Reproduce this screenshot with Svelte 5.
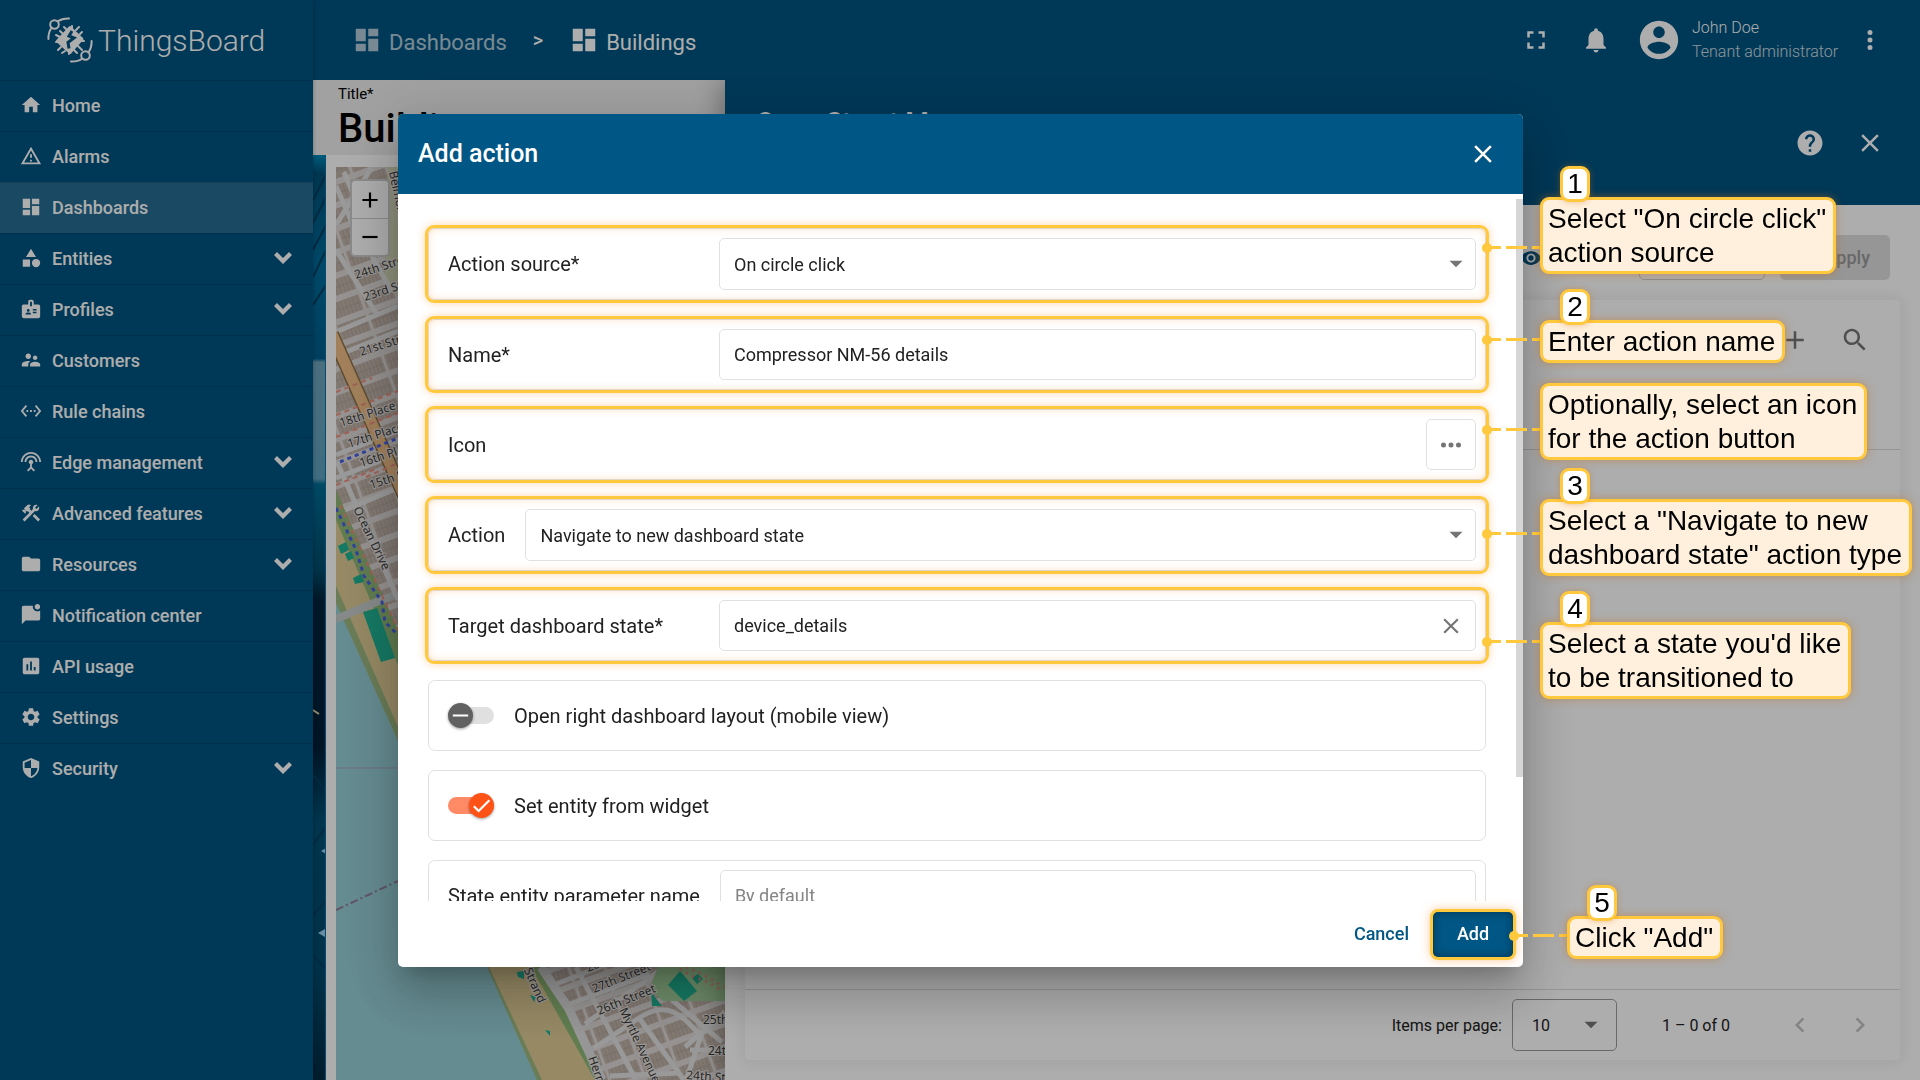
<script lang="ts">
    const icons: Record<string, string> = {
        home: "M10 20v-6h4v6h5v-8h3L12 3 2 12h3v8z",
        alarm: "M12 2L1 21h22zM12 6l7.53 13H4.47zM11 10v4h2v-4zM11 16v2h2v-2z",
        dashboard: "M3 13h8V3H3zM3 21h8v-6H3zM13 21h8V11h-8zM13 3v6h8V3z",
        shape: "M11 13.500V21.500H3V13.500zM12 2l5.500 9h-11zM17.500 13a4.500 4.500 0 1 1 0 9 4.500 4.500 0 0 1 0-9z",
        badge: "M20 7h-5V4c0-1.100-.9-2-2-2h-2c-1.100 0-2 .9-2 2v3H4c-1.100 0-2 .9-2 2v11c0 1.100.9 2 2 2h16c1.100 0 2-.9 2-2V9c0-1.100-.9-2-2-2zM9 12c.83 0 1.500.67 1.500 1.500S9.830 15 9 15s-1.500-.67-1.500-1.500S8.170 12 9 12zm3 6H6v-.75c0-1 2-1.500 3-1.500s3 .5 3 1.500V18zm1-9h-2V4h2v5zm5 7.500h-4V15h4v1.500zm0-3h-4V12h4v1.500z",
        people: "M16.500 12c1.380 0 2.490-1.120 2.490-2.500S17.880 7 16.500 7C15.120 7 14 8.120 14 9.500s1.120 2.500 2.500 2.500zM9 11c1.660 0 2.990-1.340 2.990-3S10.660 5 9 5C7.340 5 6 6.340 6 8s1.340 3 3 3zm7.500 3c-1.830 0-5.500.92-5.500 2.750V19h11v-2.250c0-1.830-3.670-2.750-5.500-2.750zM9 13c-2.330 0-7 1.170-7 3.500V19h7v-2.250c0-.85.33-2.340 2.370-3.470C10.500 13.100 9.660 13 9 13z",
        chain: "M7.770 6.760L6.230 5.480.82 12l5.410 6.520 1.540-1.280L3.420 12l4.350-5.240zM7 13h2v-2H7v2zm10-2h-2v2h2v-2zm-6 2h2v-2h-2v2zm6.770-7.520l-1.540 1.280L20.580 12l-4.350 5.240 1.540 1.280L23.180 12l-5.410-6.520z",
        antenna: "M12 5c-3.870 0-7 3.130-7 7h2c0-2.760 2.240-5 5-5s5 2.240 5 5h2c0-3.870-3.130-7-7-7zm1 9.290c.88-.39 1.500-1.260 1.500-2.290 0-1.380-1.120-2.500-2.500-2.500S9.500 10.620 9.500 12c0 1.020.62 1.900 1.500 2.290v3.300L7.590 21 9 22.410l3-3 3 3L16.410 21 13 17.590v-3.300zM12 1C5.930 1 1 5.930 1 12h2c0-4.970 4.030-9 9-9s9 4.030 9 9h2c0-6.070-4.930-11-11-11z",
        tools: "M13.783 15.172l2.121-2.121 5.996 5.996-2.121 2.121zM17.500 10c1.930 0 3.500-1.570 3.500-3.500 0-.58-.16-1.120-.41-1.600l-2.700 2.700-1.490-1.490 2.700-2.700c-.48-.25-1.020-.41-1.600-.41C15.570 3 14 4.570 14 6.500c0 .41.08.8.21 1.160l-1.850 1.850-1.780-1.780.71-.71-1.410-1.410L12 3.490c-1.170-1.170-3.070-1.170-4.240 0L4.220 7.030l1.410 1.410H2.810l-.71.71 3.540 3.540.71-.71V9.150l1.410 1.410.71-.71 1.780 1.780-7.410 7.410 2.120 2.120L16.340 9.790c.36.13.75.21 1.160.21z",
        folder: "M10 4H4c-1.100 0-1.990.9-1.990 2L2 18c0 1.100.9 2 2 2h16c1.100 0 2-.9 2-2V8c0-1.100-.9-2-2-2h-8l-2-2z",
        chat: "M22 6.980V16c0 1.100-.9 2-2 2H6l-4 4V4c0-1.100.9-2 2-2h10.100c-.06.32-.1.66-.1 1 0 2.760 2.240 5 5 5 1.130 0 2.160-.39 3-1.020zM16 3c0 1.660 1.340 3 3 3s3-1.340 3-3-1.340-3-3-3-3 1.340-3 3z",
        chart: "M19 3H5c-1.100 0-2 .9-2 2v14c0 1.100.9 2 2 2h14c1.100 0 2-.9 2-2V5c0-1.100-.9-2-2-2zM9 17H7v-7h2v7zm4 0h-2V7h2v10zm4 0h-2v-4h2v4z",
        gear: "M19.140 12.940c.04-.3.06-.61.06-.94 0-.32-.02-.64-.07-.94l2.030-1.580c.18-.14.23-.41.12-.61l-1.920-3.320c-.12-.22-.37-.29-.59-.22l-2.390.96c-.5-.38-1.030-.7-1.620-.94l-.36-2.540c-.04-.24-.24-.41-.48-.41h-3.840c-.24 0-.43.17-.47.41l-.36 2.540c-.59.24-1.130.57-1.620.94l-2.390-.96c-.22-.08-.47 0-.59.22L2.740 8.870c-.12.21-.08.47.12.61l2.030 1.580c-.05.3-.09.63-.09.94s.02.64.07.94l-2.030 1.580c-.18.14-.23.41-.12.61l1.920 3.320c.12.22.37.29.59.22l2.390-.96c.5.38 1.030.7 1.620.94l.36 2.540c.05.24.24.41.48.41h3.840c.24 0 .44-.17.47-.41l.36-2.540c.59-.24 1.130-.56 1.620-.94l2.390.96c.22.08.47 0 .59-.22l1.920-3.320c.12-.22.07-.47-.12-.61l-2.010-1.580zM12 15.600c-1.980 0-3.600-1.620-3.600-3.600s1.620-3.600 3.600-3.600 3.600 1.620 3.600 3.600-1.620 3.600-3.600 3.600z",
        shield: "M12 1L3 5v6c0 5.550 3.840 10.740 9 12 5.160-1.260 9-6.450 9-12V5l-9-4zm0 10.990h7c-.53 4.120-3.280 7.790-7 8.940V12H5V6.300l7-3.110v8.800z",
        fullscreen: "M7 14H5v5h5v-2H7v-3zm-2-4h2V7h3V5H5v5zm12 7h-3v2h5v-5h-2v3zM14 5v2h3v3h2V5h-5z",
        bell: "M12 22c1.100 0 2-.9 2-2h-4c0 1.100.89 2 2 2zm6-6v-5c0-3.070-1.640-5.640-4.500-6.320V4c0-.83-.67-1.500-1.500-1.500s-1.500.67-1.500 1.500v.68C7.630 5.360 6 7.920 6 11v5l-2 2v1h16v-1l-2-2z",
        account: "M12 2C6.480 2 2 6.480 2 12s4.480 10 10 10 10-4.480 10-10S17.520 2 12 2zm0 3c1.660 0 3 1.340 3 3s-1.340 3-3 3-3-1.340-3-3 1.340-3 3-3zm0 14.200c-2.500 0-4.710-1.280-6-3.220.03-1.990 4-3.080 6-3.080 1.990 0 5.970 1.090 6 3.080-1.290 1.940-3.500 3.220-6 3.220z",
        more: "M12 8a2 2 0 1 0 0-4 2 2 0 0 0 0 4zm0 2a2 2 0 1 0 0 4 2 2 0 0 0 0-4zm0 6a2 2 0 1 0 0 4 2 2 0 0 0 0-4z",
        dots: "M6 10a2 2 0 1 0 0 4 2 2 0 0 0 0-4zm12 0a2 2 0 1 0 0 4 2 2 0 0 0 0-4zm-6 0a2 2 0 1 0 0 4 2 2 0 0 0 0-4z",
        help: "M12 2C6.480 2 2 6.480 2 12s4.480 10 10 10 10-4.480 10-10S17.520 2 12 2zm1 17h-2v-2h2v2zm2.070-7.750l-.9.920C13.450 12.900 13 13.500 13 15h-2v-.5c0-1.100.45-2.100 1.170-2.830l1.240-1.260c.37-.36.59-.86.59-1.410 0-1.100-.9-2-2-2s-2 .9-2 2H8c0-2.210 1.790-4 4-4s4 1.790 4 4c0 .88-.36 1.680-.93 2.250z",
        close: "M19 6.410L17.590 5 12 10.590 6.410 5 5 6.410 10.590 12 5 17.590 6.410 19 12 13.410 17.590 19 19 17.590 13.410 12z",
        add: "M19 13h-6v6h-2v-6H5v-2h6V5h2v6h6v2z",
        minus: "M5 11h14v2H5z",
        search: "M15.500 14h-.79l-.28-.27C15.410 12.590 16 11.110 16 9.500 16 5.910 13.090 3 9.500 3S3 5.910 3 9.500 5.910 16 9.500 16c1.610 0 3.090-.59 4.230-1.570l.27.28v.79l5 4.990L20.490 19l-4.990-5zm-6 0C7.010 14 5 11.990 5 9.500S7.010 5 9.500 5 14 7.010 14 9.500 11.990 14 9.500 14z",
        eye: "M12 4.500C7 4.500 2.730 7.610 1 12c1.730 4.390 6 7.500 11 7.500s9.270-3.110 11-7.500c-1.730-4.390-6-7.500-11-7.500zM12 17c-2.760 0-5-2.240-5-5s2.240-5 5-5 5 2.240 5 5-2.240 5-5 5zm0-8c-1.660 0-3 1.340-3 3s1.340 3 3 3 3-1.340 3-3-1.340-3-3-3z",
        down: "M4.800 9.600L7.200 7.200l4.800 4.800 4.800-4.800 2.400 2.400-7.200 7.200z",
        left: "M15.410 7.410L14 6l-6 6 6 6 1.410-1.410L10.830 12z",
        right: "M10 6L8.590 7.410 13.170 12l-4.580 4.590L10 18l6-6z",
        arrow: "M6 9l6 6 6-6z"
    }

    const menu = [
        {icon: "home", label: "Home"},
        {icon: "alarm", label: "Alarms"},
        {icon: "dashboard", label: "Dashboards", active: true},
        {icon: "shape", label: "Entities", group: true},
        {icon: "badge", label: "Profiles", group: true},
        {icon: "people", label: "Customers"},
        {icon: "chain", label: "Rule chains"},
        {icon: "antenna", label: "Edge management", group: true},
        {icon: "tools", label: "Advanced features", group: true},
        {icon: "folder", label: "Resources", group: true},
        {icon: "chat", label: "Notification center"},
        {icon: "chart", label: "API usage"},
        {icon: "gear", label: "Settings"},
        {icon: "shield", label: "Security", group: true}
    ]

    // x/y is the corner of the bubble, dot is the height of its connector
    const steps = [
        {n: "1", x: 1540, y: 197, dot: 247, lines: ['Select "On circle click"', "action source"]},
        {n: "2", x: 1540, y: 320, dot: 339, lines: ["Enter action name"]},
        {n: "", x: 1540, y: 383, dot: 429, lines: ["Optionally, select an icon", "for the action button"]},
        {n: "3", x: 1540, y: 499, dot: 533, lines: ['Select a "Navigate to new', 'dashboard state" action type']},
        {n: "4", x: 1540, y: 622, dot: 641, lines: ["Select a state you'd like", "to be transitioned to"]},
        {n: "5", x: 1567, y: 916, dot: 935, lines: ['Click "Add"']}
    ]

    const streets = [
        {x: 356, y: 279, r: -18, t: "24th Street"},
        {x: 365, y: 301, r: -18, t: "23rd Street"},
        {x: 361, y: 356, r: -18, t: "21st Street"},
        {x: 341, y: 427, r: -18, t: "18th Place"},
        {x: 349, y: 448, r: -18, t: "17th Place"},
        {x: 361, y: 467, r: -18, t: "16th Place"},
        {x: 371, y: 489, r: -18, t: "15th Place"},
        {x: 353, y: 509, r: 64, t: "Ocean Drive"},
        {x: 594, y: 993, r: -22, t: "27th Street"},
        {x: 599, y: 1015, r: -22, t: "26th Street"},
        {x: 588, y: 972, r: -22, t: "28th Street"},
        {x: 703, y: 1024, r: 0, t: "25th Street"},
        {x: 708, y: 1055, r: 0, t: "24th Street"},
        {x: 686, y: 1079, r: 4, t: "24th Street"},
        {x: 619, y: 1010, r: 65, t: "Myrtle Avenue"},
        {x: 588, y: 1058, r: 70, t: "Hermosa Avenue"},
        {x: 514, y: 948, r: 66, t: "The Strand"},
        {x: 389, y: 172, r: 78, t: "Belmont"}
    ]

    let name = $state("Compressor NM-56 details")
    let target = $state("device_details")
    let rightLayout = $state(false)
    let setEntity = $state(true)
</script>

{#snippet icon(id: string, size = "")}
    <svg class="icon {size}" viewBox="0 0 24 24" aria-hidden="true"><path fill-rule="evenodd" d={icons[id]} /></svg>
{/snippet}

<div class="app">
    <aside class="sidebar">
        <div class="logo">
            <svg class="logo-mark" viewBox="0 0 46 46" aria-hidden="true">
                <g fill="none" stroke="currentColor" stroke-width="2" stroke-linecap="round">
                    <circle cx="7.500" cy="7.500" r="4.300" />
                    <path d="M10.500 4.500C14 2 18 1.300 22 1.400M4.800 10.500C2 14 1.300 18 1.400 22" />
                    <circle cx="38.500" cy="38.500" r="4.300" />
                    <path d="M35.500 41.500C32 44 28 44.700 24 44.600M41.200 35.500C44 32 44.700 28 44.600 24" />
                    <path d="M20 13l-3-3M16 17l-3-3M13 20l-4-2M25 11V9M29 13l3-3M33 17l2-2M11 25H9M14 30l-3 3M18 34l-3 2M22 36v1M27 33l3 3M31 29l4 4M35 24h2" />
                </g>
                <path fill="currentColor" d="M23 10.500L35 22 23 35.500 10.500 24z" stroke="currentColor" stroke-width="3" stroke-linejoin="round" />
                <path class="logo-bolt" d="M25 14l-3 5 5 2-6 4.500 1 6" />
            </svg>
            <span>ThingsBoard</span>
        </div>
        <nav>
            {#each menu as item}
                <a href="#{item.icon}" class="menu-item" class:active={item.active}>
                    {@render icon(item.icon, "small")}
                    <span>{item.label}</span>
                    {#if item.group}{@render icon("down")}{/if}
                </a>
            {/each}
        </nav>
    </aside>

    <div class="main">
        <header class="toolbar">
            <nav class="crumbs">
                <a href="#dashboards" class="parent">{@render icon("dashboard")}<span>Dashboards</span></a>
                <span class="sep">&gt;</span>
                <a href="#buildings">{@render icon("dashboard")}<span>Buildings</span></a>
            </nav>
            <div class="user-area">
                <div class="quick">
                    <button aria-label="Fullscreen">{@render icon("fullscreen")}</button>
                    <button aria-label="Notifications">{@render icon("bell")}</button>
                </div>
                <div class="user">
                    {@render icon("account", "large")}
                    <div class="user-text">
                        <span>John Doe</span>
                        <span class="role">Tenant administrator</span>
                    </div>
                </div>
                <button aria-label="More">{@render icon("more")}</button>
            </div>
        </header>

        <div class="content">
            <section class="dashboard">
                <div class="title">
                    <span class="title-label">Title*</span>
                    <h1>Buildings</h1>
                </div>
                <div class="board">
                    <svg class="wallpaper" viewBox="0 0 13 925" preserveAspectRatio="none" aria-hidden="true">
                        <defs>
                            <linearGradient id="wall" x1="0" y1="0" x2="0" y2="1">
                                <stop offset="0" stop-color="#0088b8" />
                                <stop offset="0.020" stop-color="#005076" />
                                <stop offset="0.120" stop-color="#006b9a" />
                                <stop offset="0.220" stop-color="#005e8c" />
                                <stop offset="0.224" stop-color="#6ea3ba" />
                                <stop offset="0.350" stop-color="#5fa0bd" />
                                <stop offset="0.356" stop-color="#006c93" />
                                <stop offset="0.450" stop-color="#004b6b" />
                                <stop offset="0.480" stop-color="#00243d" />
                                <stop offset="0.640" stop-color="#001f36" />
                                <stop offset="0.720" stop-color="#004f73" />
                                <stop offset="0.880" stop-color="#00496b" />
                                <stop offset="1" stop-color="#002a42" />
                            </linearGradient>
                        </defs>
                        <rect width="13" height="925" fill="url(#wall)" />
                        <path d="M13 20L0 45M13 42L0 68M13 70L0 95M13 95L0 122M13 130L0 150M0 620l13 16M0 690l13-18M0 760l13-14M0 800l13 14" stroke="#003f60" stroke-width="2" fill="none" />
                        <path d="M8 696l5-3v6zM5 778l7-4v8z" fill="#9ad0ee" />
                        <path d="M0 555l6 4" stroke="#d8c9a0" stroke-width="2" />
                        <path d="M12 0h1v925h-1z" fill="#0073ab" />
                    </svg>
                    <div class="widget">
                        <svg class="map" viewBox="336 167 389 913" preserveAspectRatio="xMinYMin slice" aria-label="Map">
                            <defs>
                                <pattern id="houses" width="34" height="22" patternUnits="userSpaceOnUse" patternTransform="rotate(-20)">
                                    <rect width="34" height="22" fill="#dcd8d6" />
                                    <rect x="1" y="3" width="31" height="16" fill="#c3b4ab" />
                                    <path d="M1 11h31M5 3v16M9 3v16M13 3v16M17 3v16M21 3v16M25 3v16M29 3v16" stroke="#b0a299" stroke-width="1" />
                                </pattern>
                            </defs>
                            <rect x="336" y="167" width="389" height="913" fill="url(#houses)" />
                            <path d="M388 167h12v130l-16-10z" fill="#d2d6b5" />
                            <path d="M336 490L398 630 530 965h60l60 115H336z" fill="#8fb877" />
                            <path d="M336 520L398 665 505 967h26l64 113H336z" fill="#ddca94" />
                            <path d="M336 586L398 727 489 967l53 113H336z" fill="#9cb880" />
                            <path d="M336 603L398 741 487 967l50 113H336z" fill="#95ced6" />
                            <path d="M336 619l45-19 17-6" stroke="#c5ccc9" stroke-width="8" fill="none" />
                            <path d="M541 967l24 30 36 83h124V967z" fill="url(#houses)" />
                            <g fill="none" stroke="#e2e2e2" stroke-width="5">
                                <path d="M336 225l36-58M336 332l62-26M336 356l62-25M336 455l62-24M336 478l62-24M345 510l53-22M344 172l25 60M336 186l28 64M337 462l61 138M336 250l42 66M362 238l30 54" />
                                <path d="M576 967l60 113M556 984l90-35M570 1004l80-30M585 1024l92-66M594 1048l45-30c30-20 45 0 62 18l-15 44M639 1018l45 62M725 1012l-40 35M690 1050h35M672 1000l50 42M610 1076l70-3" />
                            </g>
                            <path d="M541 967l28 42 33 71" stroke="#dededf" stroke-width="9" fill="none" />
                            <path d="M332 334l74 166" stroke="#8a7046" stroke-width="14" />
                            <path d="M332 334l74 166" stroke="#eebd86" stroke-width="11" />
                            <path d="M336 392l36-14M336 415l62-24M336 437l62-24M336 485l40-16M366 477l32-14M340 505l58 125" stroke="#ee8f7e" stroke-width="2" stroke-dasharray="5 4" fill="none" />
                            <path d="M340 462l58-24M336 508l20 42 8 26 18 26 3 20 13 13" stroke="#4b62e8" stroke-width="3" stroke-dasharray="4 4" fill="none" />
                            <path d="M658 967h67v34h-62l-14-12z" fill="#a3d09b" />
                            <path d="M668 985l12-14 17 20-13 10zM692 978l6-4 5 5-6 5zM651 992l11 14h-10zM363 612l14-4 18 50-14 4zM338 546l8-4 3 8-8 4zM345 554l6-3 3 7-6 3zM353 578l8-4 3 8-9 2zM517 972l7-1v8l-6-2zM530 995l6 2-2 5zM545 1030l5 1v5z" fill="#1fb393" />
                            <path d="M680 969l14 8 16 6 12 8M686 967l18 8 20 12" stroke="#ee8f8c" stroke-width="3" stroke-dasharray="2 5" fill="none" />
                            <path d="M336 768h62" stroke="#a9a3b5" stroke-width="1" />
                            <path d="M336 910l62-29" stroke="#907d97" stroke-width="2" stroke-dasharray="8 3 2 3" />
                            {#each streets as s}
                                <text x={s.x} y={s.y} transform="rotate({s.r} {s.x} {s.y})">{s.t}</text>
                            {/each}
                        </svg>
                        <div class="zoom-control">
                            <button aria-label="Zoom in">{@render icon("add", "medium")}</button>
                            <button aria-label="Zoom out">{@render icon("minus", "medium")}</button>
                        </div>
                    </div>
                </div>
            </section>

            <section class="drawer">
                <header class="drawer-head">
                    <h2>Open Street Map</h2>
                    <button aria-label="Help">{@render icon("help")}</button>
                    <button aria-label="Close panel">{@render icon("close")}</button>
                </header>
                <div class="drawer-bar">
                    <button class="eye" aria-label="Preview">{@render icon("eye", "small")}</button>
                    <button class="outlined">Cancel</button>
                    <button class="apply" disabled>Apply</button>
                </div>
                <div class="table-card">
                    <div class="table-bar">
                        <button aria-label="Add action row">{@render icon("add")}</button>
                        <button aria-label="Search">{@render icon("search")}</button>
                    </div>
                    <div class="table-body"></div>
                    <footer class="paginator">
                        <label for="page-size">Items per page:</label>
                        <div class="page-size">
                            <select id="page-size"><option>10</option></select>
                            {@render icon("arrow", "medium")}
                        </div>
                        <span class="range">1 – 0 of 0</span>
                        <button disabled aria-label="Previous page">{@render icon("left")}</button>
                        <button disabled aria-label="Next page">{@render icon("right")}</button>
                    </footer>
                </div>
            </section>
        </div>
    </div>
</div>

<div class="backdrop">
    <div class="dialog" role="dialog" aria-labelledby="dialog-title">
        <header class="dialog-head">
            <h2 id="dialog-title">Add action</h2>
            <button aria-label="Close">{@render icon("close")}</button>
        </header>
        <div class="dialog-body">
            <div class="row marked">
                <label class="wide" for="source">Action source*</label>
                <div class="field tall">
                    <select id="source"><option>On circle click</option></select>
                    {@render icon("arrow", "medium")}
                </div>
            </div>
            <div class="row marked">
                <label class="wide" for="name">Name*</label>
                <div class="field"><input id="name" type="text" bind:value={name} /></div>
            </div>
            <div class="row marked">
                <span class="grow" id="icon-label">Icon</span>
                <button class="icon-picker" aria-labelledby="icon-label">{@render icon("dots")}</button>
            </div>
            <div class="row marked">
                <label for="action">Action</label>
                <div class="field tall">
                    <select id="action"><option>Navigate to new dashboard state</option></select>
                    {@render icon("arrow", "medium")}
                </div>
            </div>
            <div class="row marked">
                <label class="wide" for="target">Target dashboard state*</label>
                <div class="field">
                    <input id="target" type="text" bind:value={target} />
                    <button class="clear" aria-label="Clear" onclick={() => target = ""}>{@render icon("close", "medium")}</button>
                </div>
            </div>
            <label class="row toggle">
                <input type="checkbox" role="switch" bind:checked={rightLayout} />
                <span class="switch"><svg viewBox="0 0 24 24"><path d="M4 11h16v2H4z" /></svg></span>
                Open right dashboard layout (mobile view)
            </label>
            <label class="row toggle">
                <input type="checkbox" role="switch" bind:checked={setEntity} />
                <span class="switch"><svg viewBox="0 0 24 24"><path d="M9 16.200L4.800 12l-1.600 1.600L9 19.400 21 7.400l-1.600-1.600z" /></svg></span>
                Set entity from widget
            </label>
            <div class="row">
                <label for="param">State entity parameter name</label>
                <div class="field"><input id="param" type="text" placeholder="By default" /></div>
            </div>
        </div>
        <div class="thumb"></div>
        <footer class="dialog-foot">
            <button class="cancel">Cancel</button>
            <button class="add">Add</button>
        </footer>
    </div>
</div>

<div class="tour">
    {#each steps as step}
        <svg class="wire" style="left: {step.x - 58}px; top: {step.dot - 5}px" viewBox="0 0 60 12" aria-hidden="true">
            <circle cx="5" cy="6" r="5" />
            <path d="M5 4h14v3H5zM24 4h21v3H24zM50 4h10v3H50z" />
        </svg>
        <div class="bubble" style="left: {step.x}px; top: {step.y}px">
            {#if step.n}<b class="number">{step.n}</b>{/if}
            {#each step.lines as line}<span>{line}</span>{/each}
        </div>
    {/each}
</div>

<style>
    :global(body) {
        font-family: Roboto, "Liberation Sans", sans-serif;
        color: #212121;
        overflow: hidden;
    }

    :global(*) {
        box-sizing: border-box;
    }

    button, input, select {
        font: inherit;
        color: inherit;
        background: none;
        border: 0;
        padding: 0;
        margin: 0;
        outline: 0;
        appearance: none;
    }

    button {
        display: flex;
        align-items: center;
        justify-content: center;
    }

    a {
        color: inherit;
        text-decoration: none;
    }

    h1, h2 {
        margin: 0;
        font-weight: 500;
    }

    .icon {
        width: 30px;
        height: 30px;
        flex: none;
        fill: currentColor;
    }

    .icon.small {
        width: 22px;
        height: 22px;
    }

    .icon.medium {
        width: 26px;
        height: 26px;
    }

    .icon.large {
        width: 46px;
        height: 46px;
    }

    .app {
        display: flex;
        height: 100vh;
    }

    .sidebar {
        width: 313px;
        flex: none;
        background: #005380;
        color: #fff;
        position: relative;
        z-index: 1;
        box-shadow: 0 0 4px rgba(0, 0, 0, 0.3);
    }

    .logo {
        height: 80px;
        display: flex;
        align-items: center;
        padding-left: 47px;
        gap: 5px;
        font-size: 30px;
        font-weight: 300;
    }

    .logo-mark {
        width: 46px;
        height: 46px;
    }

    .logo-bolt {
        fill: none;
        stroke: #005380;
        stroke-width: 3;
    }

    .menu-item {
        display: flex;
        align-items: center;
        gap: 10px;
        height: 51px;
        padding: 0 15px 2px 20px;
        border-top: 1px solid rgba(0, 0, 0, 0.12);
        font-size: 18px;
        font-weight: 500;
    }

    .menu-item span {
        flex: 1;
    }

    .menu-item.active {
        background: rgba(255, 255, 255, 0.15);
    }

    .main {
        flex: 1;
        min-width: 0;
        display: flex;
        flex-direction: column;
    }

    .toolbar {
        height: 80px;
        flex: none;
        display: flex;
        align-items: center;
        justify-content: space-between;
        padding: 0 35px 0 39px;
        background: #005380;
        color: #fff;
    }

    .crumbs, .crumbs a, .user-area, .quick, .user {
        display: flex;
        align-items: center;
    }

    .crumbs a {
        gap: 7px;
        font-size: 22px;
    }

    .crumbs a span {
        padding-top: 4px;
    }

    .crumbs .parent {
        opacity: 0.7;
    }

    .sep {
        padding: 0 26px;
        font-size: 20px;
        font-weight: 500;
    }

    .user-area {
        gap: 16px;
    }

    .quick {
        gap: 30px;
        padding-right: 9px;
    }

    .user {
        gap: 10px;
    }

    .user-text {
        display: flex;
        flex-direction: column;
        width: 147px;
        font-size: 16px;
        font-weight: 300;
        line-height: 24px;
        white-space: nowrap;
    }

    .role {
        opacity: 0.8;
    }

    .content {
        flex: 1;
        min-height: 0;
        display: flex;
    }

    .dashboard {
        width: 412px;
        flex: none;
        display: flex;
        flex-direction: column;
    }

    .title {
        height: 75px;
        padding: 5px 25px 0;
        background: #ededed;
        color: #000;
    }

    .title-label {
        display: block;
        font-size: 15px;
        line-height: 18px;
    }

    .title h1 {
        font-size: 40px;
        line-height: 52px;
    }

    .board {
        flex: 1;
        min-height: 0;
        display: flex;
    }

    .wallpaper {
        width: 13px;
        height: 100%;
        flex: none;
    }

    .widget {
        position: relative;
        flex: 1;
        min-width: 0;
        padding: 12px 0 0 10px;
        background: #fff;
    }

    .map {
        display: block;
        width: 100%;
        height: 100%;
    }

    .map text {
        font: 12px "Noto Sans", sans-serif;
        fill: #3b3b3b;
        stroke: #e8e4e0;
        stroke-width: 2;
        paint-order: stroke;
    }

    .zoom-control {
        position: absolute;
        left: 24px;
        top: 24px;
        border: 2px solid rgba(0, 0, 0, 0.2);
        border-radius: 5px;
        background: #fff;
        color: #000;
    }

    .zoom-control button {
        width: 36px;
        height: 37px;
    }

    .zoom-control button + button {
        border-top: 1px solid #ccc;
    }

    .drawer {
        flex: 1;
        min-width: 0;
        position: relative;
        display: flex;
        flex-direction: column;
        background: #fff;
        box-shadow: -4px 0 24px rgba(0, 0, 0, 0.3);
        clip-path: inset(0 0 0 -40px);
    }

    .drawer-head {
        height: 125px;
        flex: none;
        display: flex;
        align-items: center;
        gap: 30px;
        padding: 0 35px 0 31px;
        background: #005380;
        color: #fff;
    }

    .drawer-head h2 {
        flex: 1;
        align-self: flex-start;
        padding-top: 25px;
        font-size: 27px;
        line-height: 36px;
    }

    .drawer-bar {
        display: flex;
        align-items: center;
        justify-content: flex-end;
        padding: 30px 30px 20px;
        font-size: 18px;
        font-weight: 500;
        gap: 15px;
    }

    .eye {
        margin-right: 82px;
        color: #005380;
    }

    .outlined {
        width: 126px;
        height: 45px;
        border: 1px solid #ccc;
        border-radius: 5px;
        color: #005380;
    }

    .apply {
        justify-content: flex-end;
        width: 110px;
        height: 45px;
        padding-right: 20px;
        border-radius: 5px;
        background: #dedede;
        color: #999;
    }

    .table-card {
        flex: 1;
        display: flex;
        flex-direction: column;
        margin: 0 20px 20px;
        border-radius: 4px;
        background: #fff;
        box-shadow: 0 0 14px 2px rgba(0, 20, 20, 0.08);
    }

    .table-bar {
        height: 80px;
        display: flex;
        align-items: center;
        justify-content: flex-end;
        gap: 30px;
        padding-right: 30px;
        color: #757575;
    }

    .table-body {
        flex: 1;
        border-bottom: 1px solid #dcdcdc;
        background: linear-gradient(#dcdcdc, #dcdcdc) 0 69px / 100% 1px no-repeat;
    }

    .paginator {
        height: 70px;
        display: flex;
        align-items: center;
        justify-content: flex-end;
        padding-right: 25px;
        font-size: 16px;
        gap: 30px;
    }

    .paginator label {
        margin-right: -20px;
    }

    .page-size {
        display: flex;
        align-items: center;
        width: 105px;
        height: 52px;
        padding: 0 12px 0 19px;
        border: 1px solid #9b9b9b;
        border-radius: 5px;
    }

    .page-size select {
        flex: 1;
        min-width: 0;
    }

    .page-size .icon {
        color: #757575;
    }

    .range {
        padding: 0 25px 0 15px;
    }

    .paginator button {
        color: #c2c2c2;
    }

    .backdrop {
        position: fixed;
        inset: 0;
        z-index: 2;
        display: flex;
        padding: 114px 397px 113px 398px;
        background: rgba(0, 0, 0, 0.32);
    }

    .dialog {
        position: relative;
        flex: 1;
        min-width: 0;
        display: flex;
        flex-direction: column;
        border-radius: 5px;
        overflow: hidden;
        background: #fff;
        box-shadow: 0 14px 19px -9px rgba(0, 0, 0, 0.2), 0 30px 48px 4px rgba(0, 0, 0, 0.14), 0 11px 58px 10px rgba(0, 0, 0, 0.12);
    }

    .dialog-head {
        height: 80px;
        flex: none;
        display: flex;
        align-items: center;
        justify-content: space-between;
        padding: 0 25px 0 20px;
        background: #005684;
        color: #fff;
    }

    .dialog-head h2 {
        padding-bottom: 2px;
        font-size: 25px;
    }

    .dialog-body {
        flex: 1;
        min-height: 0;
        display: flex;
        flex-direction: column;
        gap: 19px;
        padding: 34px 37px 30px 30px;
        overflow-y: auto;
        scrollbar-width: none;
        font-size: 20px;
    }

    .thumb {
        position: absolute;
        right: 0;
        top: 85px;
        width: 7px;
        height: 578px;
        background: #d6d6d6;
    }

    .row {
        position: relative;
        flex: none;
        display: flex;
        align-items: center;
        gap: 20px;
        padding: 9px 9px 9px 19px;
        border: 1px solid #e0e0e0;
        border-radius: 7px;
    }

    .row.marked::after {
        content: "";
        position: absolute;
        inset: -4px;
        border: 3px solid #ffc83d;
        border-radius: 9px;
        box-shadow: 0 0 8px rgba(255, 150, 50, 0.4), inset 0 0 8px rgba(255, 150, 50, 0.3);
        pointer-events: none;
    }

    .wide {
        min-width: 251px;
    }

    .grow {
        flex: 1;
    }

    .field {
        flex: 1;
        display: flex;
        align-items: center;
        height: 51px;
        padding: 0 6px 0 14px;
        border: 1px solid #e0e0e0;
        border-radius: 5px;
        font-size: 18px;
    }

    .field.tall {
        height: 52px;
    }

    .field input, .field select {
        flex: 1;
        min-width: 0;
    }

    .field input::placeholder {
        color: #858585;
        opacity: 1;
    }

    .field .icon, .icon-picker {
        color: #757575;
    }

    .clear {
        width: 36px;
        height: 38px;
    }

    .icon-picker {
        width: 50px;
        height: 51px;
        border: 1px solid #e0e0e0;
        border-radius: 5px;
    }

    .toggle {
        height: 71px;
    }

    .toggle input {
        position: absolute;
        opacity: 0;
    }

    .switch {
        display: flex;
        align-items: center;
        width: 46px;
        height: 17px;
        border-radius: 9px;
        background: #e0e0e0;
    }

    .switch svg {
        width: 25px;
        height: 25px;
        padding: 1px;
        border-radius: 50%;
        background: #616161;
        fill: #fff;
        box-shadow: 0 1px 3px rgba(0, 0, 0, 0.4);
    }

    .toggle input:checked + .switch {
        justify-content: flex-end;
        background: #ff8a65;
    }

    .toggle input:checked + .switch svg {
        background: #ff5216;
    }

    .dialog-foot {
        height: 66px;
        flex: none;
        display: flex;
        align-items: center;
        justify-content: flex-end;
        gap: 4px;
        padding-right: 10px;
        font-size: 18px;
        font-weight: 500;
    }

    .dialog-foot button {
        height: 45px;
        padding: 0 20px 2px;
        color: #005684;
    }

    .dialog-foot .add {
        width: 80px;
        border-radius: 5px;
        background: #005684;
        color: #fff;
        box-shadow: 0 0 0 3px #ffc83d, 0 0 10px 3px rgba(255, 150, 50, 0.5), inset 0 0 8px rgba(0, 0, 0, 0.4);
    }

    .tour {
        position: fixed;
        inset: 0;
        z-index: 3;
        pointer-events: none;
        font: 28px/34px "Liberation Sans", Arial, sans-serif;
        color: #000;
    }

    .wire {
        position: absolute;
        width: 60px;
        height: 12px;
        fill: #ffc83d;
    }

    .bubble {
        position: absolute;
        display: flex;
        flex-direction: column;
        padding: 2px 7px 1px 5px;
        border: 3px solid #ffc83d;
        border-radius: 9px;
        background: #fff0dd;
        white-space: nowrap;
        box-shadow: 0 0 8px rgba(200, 110, 20, 0.5);
    }

    .number {
        position: absolute;
        left: 17px;
        top: -34px;
        width: 30px;
        height: 36px;
        border: 3px solid #ffc83d;
        border-radius: 9px;
        background: #fff;
        font-weight: 400;
        line-height: 30px;
        text-align: center;
        box-shadow: 0 0 6px rgba(200, 110, 20, 0.4);
    }
</style>
